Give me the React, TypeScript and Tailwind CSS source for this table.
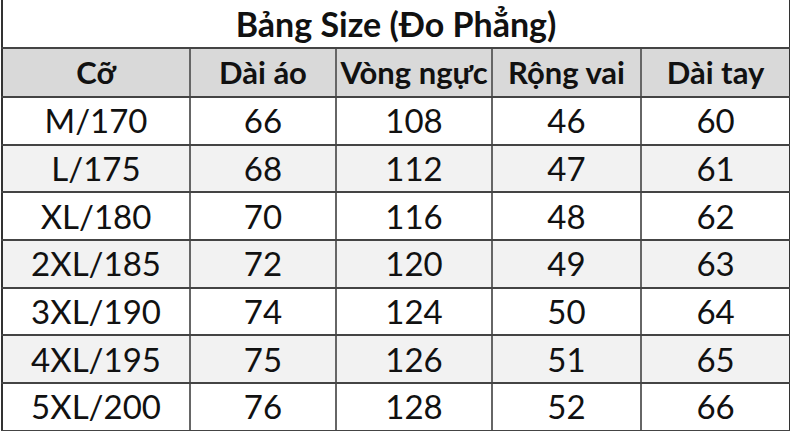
import React from 'react';

const headers = ['Cỡ', 'Dài áo', 'Vòng ngực', 'Rộng vai', 'Dài tay'];

const rows: (string | number)[][] = [
  ['M/170', 66, 108, 46, 60],
  ['L/175', 68, 112, 47, 61],
  ['XL/180', 70, 116, 48, 62],
  ['2XL/185', 72, 120, 49, 63],
  ['3XL/190', 74, 124, 50, 64],
  ['4XL/195', 75, 126, 51, 65],
  ['5XL/200', 76, 128, 52, 66],
];

const widths = ['w-[188px]', 'w-[146px]', 'w-[156px]', 'w-[149px]', 'w-[149px]'];

const App: React.FC = () => {
  return (
    <div className="w-[790px] h-[431px] overflow-hidden bg-white font-['Lato','Liberation_Sans',sans-serif] text-[#111]">
      <table className="ml-px w-[788px] table-fixed border-collapse">
        <colgroup>
          {widths.map((w, i) => (
            <col key={i} className={w} />
          ))}
        </colgroup>
        <thead>
          <tr className="h-[48px]">
            <th
              colSpan={5}
              className="border-x-2 border-b-2 border-x-[#333] border-b-[#444] p-0 pt-px text-center text-[34px] font-bold leading-none"
            >
              Bảng Size (Đo Phẳng)
            </th>
          </tr>
          <tr className="h-[49px] bg-[#d9d9d9]">
            {headers.map((h, i) => (
              <th
                key={h}
                className={`border-b-2 border-b-[#444] p-0 text-center text-[31px] font-bold leading-none whitespace-nowrap ${
                  i === 0 ? 'border-l-2 border-l-[#333]' : ''
                } ${i === 4 ? 'border-r-2 border-r-[#333]' : 'border-r-2 border-r-[#666]'}`}
              >
                {h}
              </th>
            ))}
          </tr>
        </thead>
        <tbody>
          {rows.map((r, ri) => (
            <tr key={ri} className={`h-[47.7px] ${ri % 2 === 1 ? 'bg-[#f2f2f2]' : 'bg-white'}`}>
              {r.map((c, ci) => (
                <td
                  key={ci}
                  className={`border-b-2 border-b-[#444] p-0 text-center text-[33px] leading-none ${
                    ci === 0 ? 'border-l-2 border-l-[#333]' : ''
                  } ${ci === 4 ? 'border-r-2 border-r-[#333]' : 'border-r-2 border-r-[#666]'}`}
                >
                  {c}
                </td>
              ))}
            </tr>
          ))}
        </tbody>
      </table>
    </div>
  );
};

export default App;
